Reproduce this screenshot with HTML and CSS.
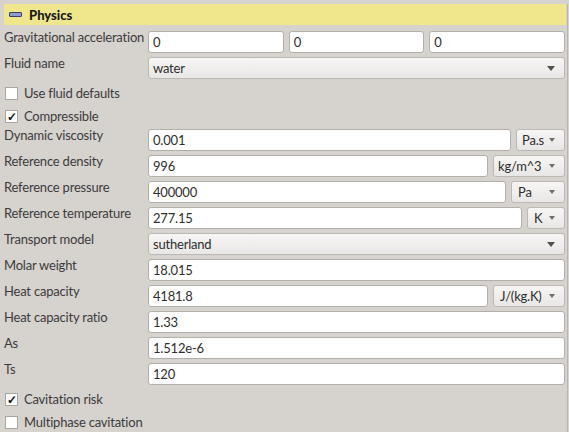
FILE: index.html
```html
<!DOCTYPE html>
<html>
<head>
<meta charset="utf-8">
<link rel="stylesheet" href="styles.css">
</head>
<body>
<div class="panel">
  <div class="header"><span class="collapse-icon"></span><span class="title">Physics</span></div>
  <div class="form">
    <div class="row">
      <div class="label">Gravitational acceleration</div>
      <div class="fields">
        <div class="field grow">0</div>
        <div class="field grow">0</div>
        <div class="field grow">0</div>
      </div>
    </div>
    <div class="row">
      <div class="label">Fluid name</div>
      <div class="fields"><div class="combo grow"><span>water</span><span class="arrow"></span></div></div>
    </div>
    <div class="check-row"><span class="box"></span><span>Use fluid defaults</span></div>
    <div class="check-row"><span class="box checked">✓</span><span>Compressible</span></div>
    <div class="row">
      <div class="label">Dynamic viscosity</div>
      <div class="fields"><div class="field grow">0.001</div><div class="combo unit u-pas"><span>Pa.s</span><span class="arrow"></span></div></div>
    </div>
    <div class="row">
      <div class="label">Reference density</div>
      <div class="fields"><div class="field grow">996</div><div class="combo unit u-kgm"><span>kg/m^3</span><span class="arrow"></span></div></div>
    </div>
    <div class="row">
      <div class="label">Reference pressure</div>
      <div class="fields"><div class="field grow">400000</div><div class="combo unit u-pa"><span>Pa</span><span class="arrow"></span></div></div>
    </div>
    <div class="row">
      <div class="label">Reference temperature</div>
      <div class="fields"><div class="field grow">277.15</div><div class="combo unit u-k"><span>K</span><span class="arrow"></span></div></div>
    </div>
    <div class="row">
      <div class="label">Transport model</div>
      <div class="fields"><div class="combo grow"><span>sutherland</span><span class="arrow"></span></div></div>
    </div>
    <div class="row">
      <div class="label">Molar weight</div>
      <div class="fields"><div class="field grow">18.015</div></div>
    </div>
    <div class="row">
      <div class="label">Heat capacity</div>
      <div class="fields"><div class="field grow">4181.8</div><div class="combo unit u-j"><span>J/(kg.K)</span><span class="arrow"></span></div></div>
    </div>
    <div class="row">
      <div class="label">Heat capacity ratio</div>
      <div class="fields"><div class="field grow">1.33</div></div>
    </div>
    <div class="row">
      <div class="label">As</div>
      <div class="fields"><div class="field grow">1.512e-6</div></div>
    </div>
    <div class="row">
      <div class="label">Ts</div>
      <div class="fields"><div class="field grow">120</div></div>
    </div>
    <div class="check-row"><span class="box checked">✓</span><span>Cavitation risk</span></div>
    <div class="check-row"><span class="box"></span><span>Multiphase cavitation</span></div>
  </div>
</div>
</body>
</html>
```

FILE: styles.css
```css
html, body {
  margin: 0;
  padding: 0;
  background: #d6d2ce;
  width: 569px;
  height: 432px;
  overflow: hidden;
}
body {
  font-family: Lato, "Noto Sans", sans-serif;
  font-size: 13px;
  letter-spacing: -0.2px;
  color: #3c3c3c;
}
.panel {
  width: 567px;
  height: 432px;
  border-right: 1px solid #b9b5b1;
  box-sizing: content-box;
}
.header {
  margin: 4px 1px 0 4px;
  height: 21px;
  background: #f0e68c;
  display: flex;
  align-items: center;
  font-weight: 900;
  color: #1a1a1a;
  letter-spacing: 0;
}
.collapse-icon {
  width: 11px;
  height: 3px;
  margin: 0 7px 0 5px;
  background: #8e9ad0;
  border: 1px solid #3a3f66;
  border-radius: 1px;
}
.form {
  padding: 6px 2px 0 4px;
  display: flex;
  flex-direction: column;
}
.row {
  display: grid;
  grid-template-columns: 144px 1fr;
  height: 22px;
  margin-bottom: 4px;
}
.label {
  line-height: 13px;
  color: #3c3c3c;
  white-space: nowrap;
}
.fields {
  display: flex;
  gap: 5px;
}
.grow { flex: 1; }
.field {
  height: 22px;
  box-sizing: border-box;
  background: #fff;
  border: 1px solid #b3afab;
  border-radius: 3px;
  padding: 0 4px;
  line-height: 20px;
  color: #2e2e2e;
}
.combo {
  height: 22px;
  box-sizing: border-box;
  border: 1px solid #bcb8b4;
  border-radius: 3px;
  background: linear-gradient(#f7f6f5, #e9e7e5);
  padding: 0 9px 0 4px;
  line-height: 20px;
  display: flex;
  justify-content: space-between;
  align-items: center;
  color: #2e2e2e;
}
.arrow {
  width: 0;
  height: 0;
  border-left: 4px solid transparent;
  border-right: 4px solid transparent;
  border-top: 5px solid #505050;
}
.unit {
  flex: none;
}
.unit .arrow {
  border-left-width: 3.5px;
  border-right-width: 3.5px;
  border-top: 4px solid #6e6e6e;
}
.u-pas { width: 49px; padding-left: 5px; }
.u-kgm { width: 72px; }
.u-pa { width: 54px; padding-left: 6px; }
.u-k { width: 38px; padding-left: 6px; }
.u-j { width: 72px; padding-left: 6px; }
.check-row {
  display: flex;
  align-items: center;
  height: 20px;
  margin-bottom: 3px;
  padding-left: 1px;
}
.box {
  width: 13px;
  height: 13px;
  box-sizing: border-box;
  background: #fff;
  border: 1px solid #a9a5a1;
  margin-right: 6px;
  font-size: 12px;
  line-height: 11px;
  text-align: center;
  color: #111;
  font-weight: bold;
  letter-spacing: 0;
}
```
